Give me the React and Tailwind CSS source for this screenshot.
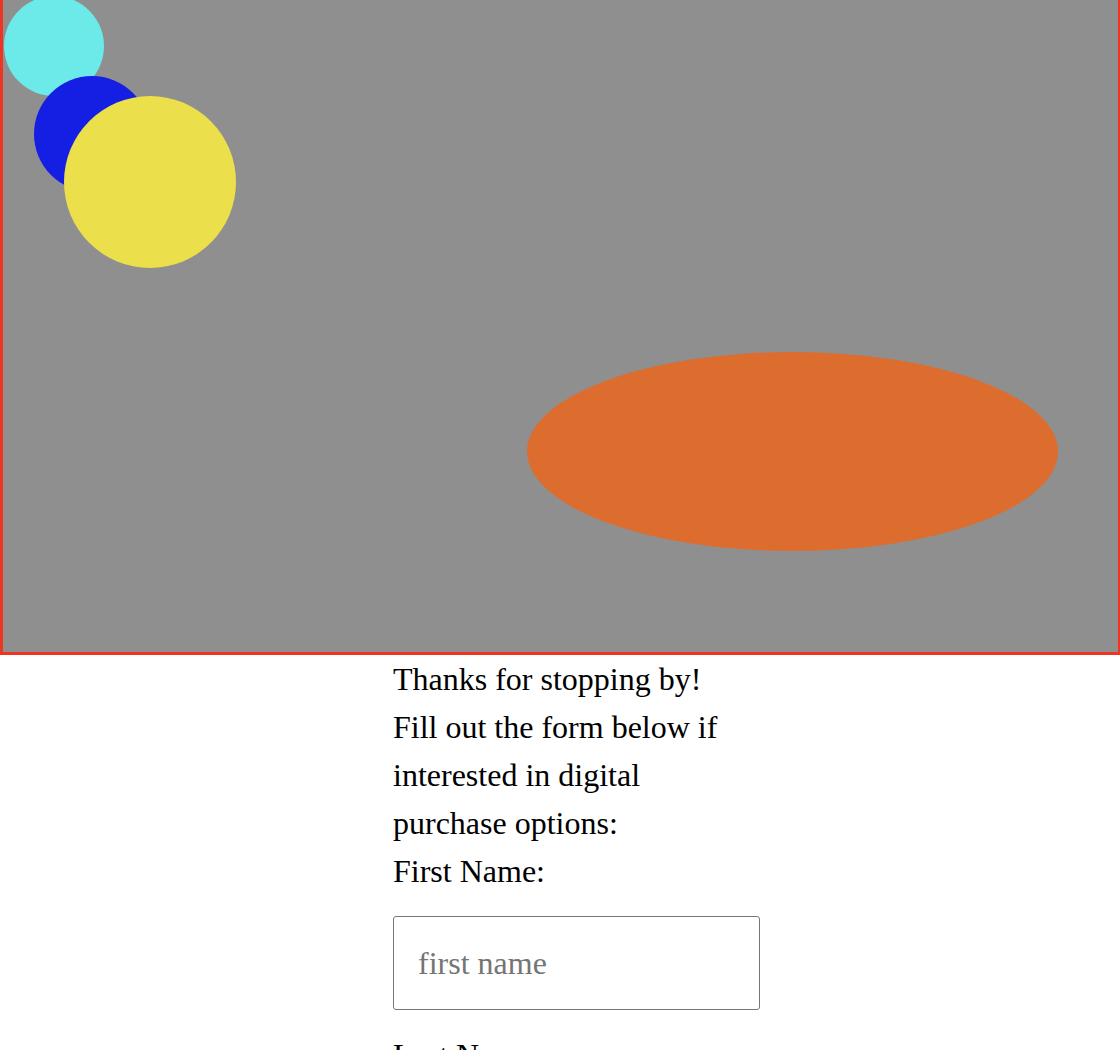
import React from 'react';

const Canvas = () => {
  return (
    <div className="h-[655px] w-full border-l-[3px] border-r-2 border-b-[3px] border-[#ee3524] bg-[#8f8f8f] overflow-hidden">
      {/* shapes drawn at page coords, shifted by the 3px left border */}
      <svg width="1115" height="652" viewBox="3 0 1115 652" className="block">
        <circle cx="54" cy="46" r="50" fill="#6ceaea" />
        <circle cx="92" cy="134" r="58" fill="#151fe3" />
        <circle cx="150" cy="182" r="86" fill="#ebe04b" />
        <ellipse cx="792.5" cy="451.5" rx="265.5" ry="99.5" fill="#dd6d2f" />
      </svg>
    </div>
  );
};

const Field = ({ label, placeholder }) => (
  <label className="block">
    <span className="block">{label}</span>
    <input
      type="text"
      placeholder={placeholder}
      className="block w-full h-[94px] my-[21px] px-6 border border-[#767676] rounded-[3px] bg-white text-[32px] placeholder:text-[#757575] outline-none"
      style={{ fontFamily: '"Liberation Serif", serif' }}
    />
  </label>
);

export default function App() {
  return (
    <div className="bg-white text-black" style={{ fontFamily: '"Liberation Serif", "Times New Roman", serif' }}>
      <Canvas />
      <form className="ml-[393px] w-[367px] text-[32px] leading-[48px]">
        <p>Thanks for stopping by!</p>
        <p>Fill out the form below if interested in digital purchase options:</p>
        <Field label="First Name:" placeholder="first name" />
        <Field label="Last Name:" placeholder="last name" />
        <Field label="Email:" placeholder="email" />
      </form>
    </div>
  );
}
